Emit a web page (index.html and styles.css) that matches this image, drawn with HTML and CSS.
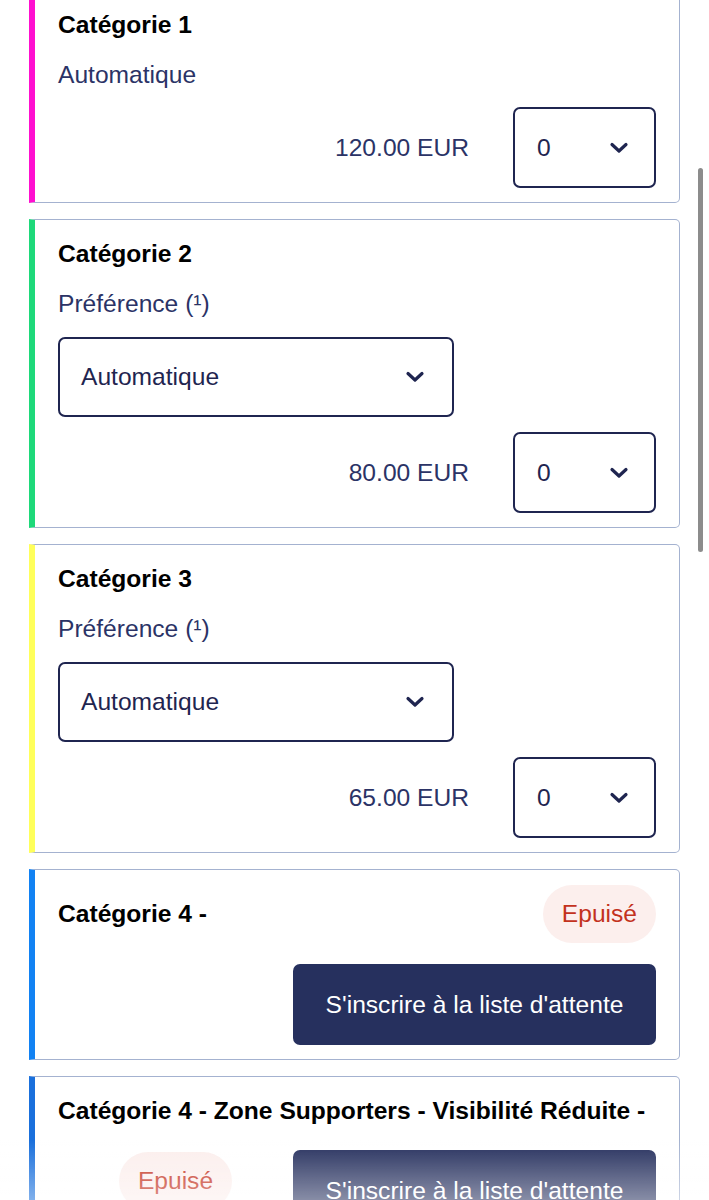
FILE: index.html
```html
<!DOCTYPE html>
<html lang="fr">
<head>
    <meta charset="UTF-8">
    <meta name="viewport" content="width=device-width, initial-scale=1.0">
    <title>Billetterie</title>
    <link rel="stylesheet" href="styles.css">
</head>
<body>
    <div class="list">
        <div class="card cat1">
            <div class="title">Catégorie 1</div>
            <div class="label">Automatique</div>
            <div class="price-row">
                <span class="price">120.00 EUR</span>
                <div class="select qty">
                    <span>0</span>
                    <svg width="20" height="12" viewBox="0 0 20 12"><path d="M3 2.5 L10 9 L17 2.5"/></svg>
                </div>
            </div>
        </div>

        <div class="card cat2">
            <div class="title">Catégorie 2</div>
            <div class="label">Préférence (¹)</div>
            <div class="select pref">
                <span>Automatique</span>
                <svg width="20" height="12" viewBox="0 0 20 12"><path d="M3 2.5 L10 9 L17 2.5"/></svg>
            </div>
            <div class="price-row">
                <span class="price">80.00 EUR</span>
                <div class="select qty">
                    <span>0</span>
                    <svg width="20" height="12" viewBox="0 0 20 12"><path d="M3 2.5 L10 9 L17 2.5"/></svg>
                </div>
            </div>
        </div>

        <div class="card cat3">
            <div class="title">Catégorie 3</div>
            <div class="label">Préférence (¹)</div>
            <div class="select pref">
                <span>Automatique</span>
                <svg width="20" height="12" viewBox="0 0 20 12"><path d="M3 2.5 L10 9 L17 2.5"/></svg>
            </div>
            <div class="price-row">
                <span class="price">65.00 EUR</span>
                <div class="select qty">
                    <span>0</span>
                    <svg width="20" height="12" viewBox="0 0 20 12"><path d="M3 2.5 L10 9 L17 2.5"/></svg>
                </div>
            </div>
        </div>

        <div class="card cat4">
            <div class="head">
                <div class="title">Catégorie 4 -</div>
                <span class="badge">Epuisé</span>
            </div>
            <div class="wait-row">
                <button class="wait">S'inscrire à la liste d'attente</button>
            </div>
        </div>

        <div class="card cat5">
            <div class="title">Catégorie 4 - Zone Supporters - Visibilité Réduite -</div>
            <div class="wait-row split">
                <div class="badge-slot"><span class="badge">Epuisé</span></div>
                <button class="wait">S'inscrire à la liste d'attente</button>
            </div>
        </div>
    </div>

    <div class="scrollbar"></div>
    <div class="fade"></div>
</body>
</html>
```

FILE: styles.css
```css
body{
    margin: 0;
    background: #fff;
    font-family: "Liberation Sans", Arial, sans-serif;
    overflow: hidden;
}
.list{
    margin-top: -10px;
    padding: 0 29px;
    display: flex;
    flex-direction: column;
    gap: 16px;
}
.card{
    border: 1.5px solid #a4b2d0;
    border-left: 6px solid #ccc;
    border-radius: 0 5px 5px 0;
    padding: 20px 23px 14px 23px;
    background: #fff;
}
.cat1{ border-left-color: #ff0fd0; }
.cat2{ border-left-color: #1ed97a; }
.cat3{ border-left-color: #ffff5a; }
.cat4{ border-left-color: #1282f3; }
.cat5{ border-left-color: #1a70dc; }

.title{
    font-size: 24.6px;
    line-height: 28px;
    font-weight: bold;
    color: #000;
}
.label{
    margin-top: 22px;
    font-size: 24.6px;
    line-height: 28px;
    color: #2b3366;
}
.select{
    box-sizing: border-box;
    display: flex;
    align-items: center;
    justify-content: space-between;
    height: 80px;
    border: 2px solid #1f2550;
    border-radius: 7px;
    font-size: 24.6px;
    color: #1f2550;
}
.select svg path{
    fill: none;
    stroke: #1f2550;
    stroke-width: 3.2;
    stroke-linecap: round;
    stroke-linejoin: round;
}
.pref{
    width: 396px;
    margin-top: 19px;
    padding: 0 27px 0 21px;
}
.qty{
    width: 143px;
    height: 81px;
    padding: 0 25px 0 22px;
}
.price-row{
    display: flex;
    justify-content: flex-end;
    align-items: center;
    gap: 44px;
    margin-top: 15px;
}
.cat1 .price-row{
    margin-top: 18px;
}
.price{
    font-size: 24.6px;
    color: #2b3366;
}

.head{
    display: flex;
    justify-content: space-between;
    align-items: center;
    margin-top: -5px;
}
.badge{
    display: inline-flex;
    align-items: center;
    height: 58px;
    padding: 0 19px;
    border-radius: 29px;
    background: #fcefed;
    color: #c3321d;
    font-size: 24.6px;
}
.wait-row{
    display: flex;
    justify-content: flex-end;
    margin-top: 21px;
}
.wait{
    width: 363px;
    height: 81px;
    border: none;
    border-radius: 7px;
    background: #26305e;
    color: #fff;
    font-family: inherit;
    font-size: 24.6px;
}
.split{
    margin-top: 25px;
    align-items: flex-start;
}
.badge-slot{
    flex: 1;
    display: flex;
    justify-content: center;
    padding-top: 2px;
}

.scrollbar{
    position: fixed;
    left: 698px;
    top: 168px;
    width: 5px;
    height: 384px;
    border-radius: 3px;
    background: #8c8c8c;
}
.fade{
    position: fixed;
    left: 0;
    right: 0;
    bottom: 0;
    height: 60px;
    background: linear-gradient(rgba(255,255,255,0), rgba(255,255,255,0.45));
}
```
